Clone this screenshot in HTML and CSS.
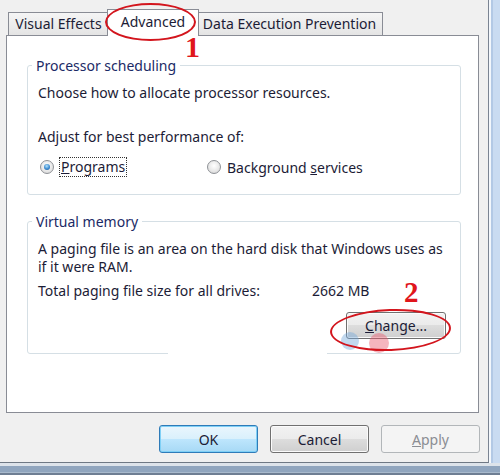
FILE: index.html
```html
<!DOCTYPE html>
<html>
<head>
<meta charset="utf-8">
<link rel="stylesheet" href="styles.css">
</head>
<body>
<div class="window">
  <div class="client">
    <div class="tabs">
      <div class="tab">Visual Effects</div>
      <div class="tab sel">Advanced</div>
      <div class="tab">Data Execution Prevention</div>
    </div>
    <div class="panel">
      <div class="group g1">
        <div class="legend">Processor scheduling</div>
        <p class="line l-choose">Choose how to allocate processor resources.</p>
        <p class="line l-adjust">Adjust for best performance of:</p>
        <div class="radios">
          <div class="radio"><span class="dot on"></span><span class="focus"><u>P</u>rograms</span></div>
          <div class="radio"><span class="dot"></span><span class="rlabel">Background <u>s</u>ervices</span></div>
        </div>
      </div>
      <div class="group g2">
        <div class="legend">Virtual memory</div>
        <p class="line l-paging">A paging file is an area on the hard disk that Windows uses as<br>if it were RAM.</p>
        <div class="line total"><span class="tlabel">Total paging file size for all drives:</span><span class="mb">2662 MB</span></div>
        <div class="btnrow"><button class="btn change"><u>C</u>hange...</button></div>
      </div>
    </div>
    <div class="actions">
      <button class="btn def">OK</button>
      <button class="btn">Cancel</button>
      <button class="btn dis"><u>A</u>pply</button>
    </div>
  </div>
  <div class="rframe"></div>
  <div class="bframe"></div>

  <div class="wm wm-white"></div>
  <div class="wm wm-blue"></div>
  <div class="wm wm-pink"></div>
  <div class="mark m1"></div>
  <div class="num n1">1</div>
  <div class="mark m2"></div>
  <div class="num n2">2</div>
</div>
</body>
</html>
```
FILE: styles.css
```css
body {
  margin: 0;
  font-family: "Noto Sans", "Open Sans", sans-serif;
  font-size: 14px;
  color: #1c1c36;
}

.window {
  width: 500px;
  height: 475px;
  display: grid;
  grid-template-columns: 489px 11px;
  grid-template-rows: 463px 12px;
  position: relative;
  overflow: hidden;
  background: #c9dbf1;
}

.client {
  background: #f0f0f0;
  border-right: 1px solid #7b8492;
  border-bottom: 1px solid #6f7884;
  box-sizing: border-box;
  display: flex;
  flex-direction: column;
}

.rframe {
  background: linear-gradient(to right, #f3f7fc 0 2px, #b3c9e5 2px 4px, #c9dbf1 4px 100%);
}

.bframe {
  grid-column: 1 / 3;
  background: linear-gradient(to bottom, #dde3ea 0 3px, #90a5be 3px 9px, #a8b9cc 9px 10px, #6e7e93 10px 12px);
}

/* tabs */
.tabs {
  display: flex;
  align-items: flex-end;
  height: 35px;
  padding-left: 8px;
  box-sizing: border-box;
}

.tab {
  height: 23px;
  box-sizing: border-box;
  border: 1px solid #898c95;
  border-bottom: none;
  background: linear-gradient(#f5f5f5, #e4e4e4);
  display: flex;
  align-items: center;
  justify-content: center;
  line-height: 16px;
}

.tab:nth-child(1) { width: 101px; }
.tab:nth-child(3) { width: 186px; border-left: none; }

.tab.sel {
  width: 92px;
  height: 27px;
  margin: 0 -2px -1px -2px;
  background: #fff;
  position: relative;
  z-index: 1;
  padding-bottom: 2px;
}

.panel {
  margin-left: 6px;
  width: 473px;
  height: 378px;
  box-sizing: border-box;
  border: 1px solid #898c95;
  background: #fff;
}

/* group boxes */
.group {
  margin-left: 20px;
  width: 434px;
  box-sizing: border-box;
  border: 1px solid #d5dfe5;
  border-radius: 3px;
  padding: 0 14px 0 10px;
}

.g1 { margin-top: 29px; padding-bottom: 17px; }
.g2 { margin-top: 26px; padding-bottom: 14px; }

.legend {
  display: table;
  margin: -8px 0 0 -6px;
  padding: 0 4px;
  background: #fff;
  line-height: 16px;
  color: #1b2a66;
}

.line {
  margin: 0;
  line-height: 18px;
}

.l-choose { margin-top: 10px; }
.l-adjust { margin-top: 26px; }
.l-paging { margin-top: 10px; }
.total { margin-top: 6px; display: flex; }
.tlabel { width: 274px; }

.radios {
  margin-top: 11px;
  display: grid;
  grid-template-columns: 167px auto;
  height: 20px;
  align-items: center;
}

.radio {
  display: flex;
  align-items: center;
  padding-left: 2px;
}

.dot {
  width: 14px;
  height: 14px;
  box-sizing: border-box;
  border-radius: 50%;
  border: 1px solid #8e9196;
  background: radial-gradient(circle at 50% 40%, #ffffff 0%, #e6e6e6 60%, #cdcdcd 100%);
  position: relative;
  flex: none;
}

.dot.on::after {
  content: "";
  position: absolute;
  inset: 3px;
  border-radius: 50%;
  background: radial-gradient(circle at 45% 35%, #b5e3fb 0%, #3a8ad0 55%, #1a4f8c 100%);
}

.focus {
  margin-left: 5px;
  padding: 0 1px;
  line-height: 18px;
  border: 1px dotted #333;
}

.rlabel { margin-left: 6px; }

.btnrow {
  display: flex;
  justify-content: flex-end;
  margin-top: 12px;
}

/* buttons */
.btn {
  width: 99px;
  height: 28px;
  padding: 0;
  border: 1px solid #707070;
  border-radius: 3px;
  background: linear-gradient(#f2f2f2 0%, #ebebeb 50%, #dddddd 50%, #cfcfcf 100%);
  box-shadow: inset 0 0 0 1px #fbfbfb;
  font: inherit;
  color: #1c1c36;
}

.btn.change {
  width: 100px;
  height: 27px;
}

.btn.def {
  border-color: #2f7bb8;
  background: linear-gradient(#eaf6fd 0%, #d9f0fc 50%, #bee6fd 50%, #a7d9f5 100%);
  box-shadow: inset 0 0 0 1px #7fd0f6;
}

.btn.dis {
  border-color: #b2b6b9;
  background: #f4f4f4;
  box-shadow: none;
  color: #8b8d93;
}

.actions {
  display: flex;
  justify-content: flex-end;
  gap: 12px;
  margin-top: 12px;
  padding-right: 8px;
}

/* annotations */
.mark {
  position: absolute;
  z-index: 2;
  box-sizing: border-box;
  border: 2px solid #d3151d;
  border-radius: 50%;
}

.m1 { left: 105px; top: 3px; width: 91px; height: 38px; }
.m2 { left: 330px; top: 309px; width: 121px; height: 42px; transform: rotate(-2deg); }

.num {
  position: absolute;
  z-index: 2;
  font-family: "Liberation Serif", serif;
  font-weight: bold;
  color: #e0161c;
}

.n1 { left: 185px; top: 32px; font-size: 30px; line-height: 30px; }
.n2 { left: 404px; top: 278px; font-size: 29px; line-height: 29px; }

.wm { position: absolute; z-index: 2; }
.wm-white { left: 168px; top: 351px; width: 159px; height: 8px; background: #fff; }
.wm-blue { left: 341px; top: 332px; width: 18px; height: 18px; border-radius: 50%; background: rgba(120, 170, 220, 0.45); }
.wm-pink { left: 369px; top: 333px; width: 20px; height: 20px; border-radius: 50%; background: rgba(232, 90, 110, 0.45); }
```
